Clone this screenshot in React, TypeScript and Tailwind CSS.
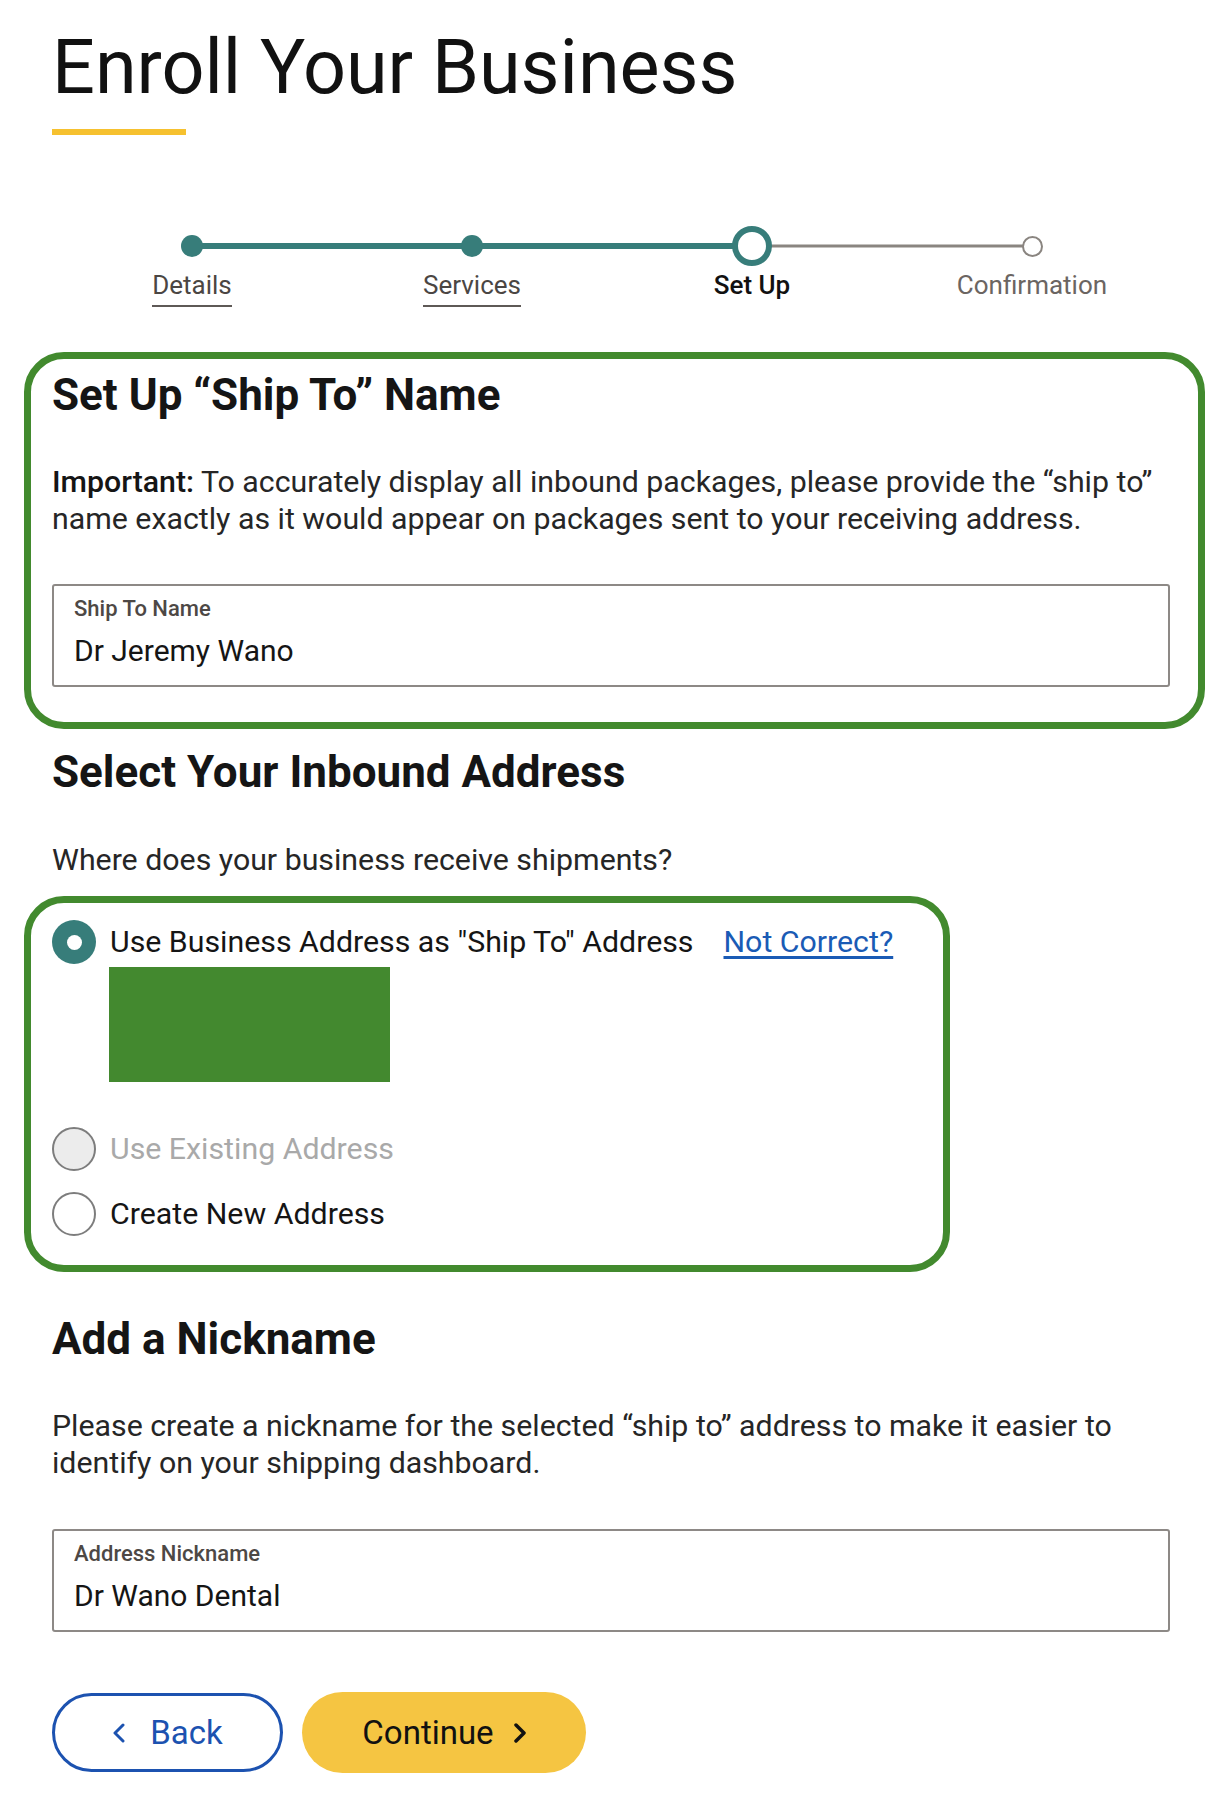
import clsx from 'clsx'

type StepState = 'done' | 'current' | 'todo'

const steps: { label: string; state: StepState }[] = [
  { label: 'Details', state: 'done' },
  { label: 'Services', state: 'done' },
  { label: 'Set Up', state: 'current' },
  { label: 'Confirmation', state: 'todo' }
]

const StepDot: React.FC<{ state: StepState }> = ({ state }) => {
  if (state === 'done') return <div className="relative z-10 h-[22px] w-[22px] rounded-full bg-[#377d7a]" />
  if (state === 'current')
    return <div className="relative z-10 h-10 w-10 rounded-full border-[6px] border-[#377d7a] bg-white" />
  return <div className="relative z-10 h-[21px] w-[21px] rounded-full border-[2.5px] border-[#8a8580] bg-white" />
}

const Stepper: React.FC = () => {
  return (
    <div className="mt-[91px] grid w-[1120px] grid-cols-4">
      {steps.map((step, i) => {
        const leftDone = step.state !== 'todo'
        const rightDone = i < steps.length - 1 && steps[i + 1].state !== 'todo'
        return (
          <div key={step.label} className="flex flex-col items-center">
            <div className="relative flex h-10 w-full items-center justify-center">
              {i > 0 && (
                <div
                  className={clsx(
                    'absolute left-0 right-1/2 top-1/2 -translate-y-1/2',
                    leftDone ? 'h-[6px] bg-[#377d7a]' : 'h-[3px] bg-[#8a8580]'
                  )}
                />
              )}
              {i < steps.length - 1 && (
                <div
                  className={clsx(
                    'absolute left-1/2 right-0 top-1/2 -translate-y-1/2',
                    rightDone ? 'h-[6px] bg-[#377d7a]' : 'h-[3px] bg-[#8a8580]'
                  )}
                />
              )}
              <StepDot state={step.state} />
            </div>
            <span
              className={clsx(
                'mt-1 border-b-2 pb-[5px] text-[26px] leading-[30px]',
                step.state === 'done' && 'border-[#5e5956] text-[#4b4643]',
                step.state === 'current' && 'border-transparent font-medium text-[#111]',
                step.state === 'todo' && 'border-transparent text-[#6b6562]'
              )}>
              {step.label}
            </span>
          </div>
        )
      })}
    </div>
  )
}

const TextField: React.FC<{ label: string; value: string; className?: string }> = ({ label, value, className }) => {
  return (
    <div className={clsx('h-[103px] w-[1118px] rounded-[3px] border-2 border-[#8d8986] px-5 pt-[10px]', className)}>
      <div className="text-[22px] font-medium leading-[26px] text-[#4d4845]">{label}</div>
      <div className="mt-[11px] text-[30px] leading-9 text-[#151515]">{value}</div>
    </div>
  )
}

const Radio: React.FC<{ variant: 'checked' | 'disabled' | 'empty' }> = ({ variant }) => {
  if (variant === 'checked')
    return (
      <div className="flex h-11 w-11 shrink-0 items-center justify-center rounded-full bg-[#377d7a]">
        <div className="h-[15px] w-[15px] rounded-full bg-white" />
      </div>
    )
  return (
    <div
      className={clsx(
        'h-11 w-11 shrink-0 rounded-full border-2 border-[#7d7d7d]',
        variant === 'disabled' ? 'bg-[#ececec]' : 'bg-white'
      )}
    />
  )
}

export default function App() {
  return (
    <div className="min-h-[1802px] bg-white pl-[52px] pt-[27px] font-['Roboto',sans-serif] text-[#151515]">
      <h1 className="text-[75.5px] leading-[80px] text-[#111]">Enroll Your Business</h1>
      <div className="mt-[22px] h-[6px] w-[134px] bg-[#f6c12f]" />

      <Stepper />

      {/* ship to name */}
      <section className="-ml-[28px] mt-[45px] w-[1181px] rounded-[40px] border-[7px] border-[#428a2e] pb-[35px] pl-[21px] pr-[28px] pt-[11px]">
        <h2 className="text-[44px] font-bold leading-[50px]">Set Up “Ship To” Name</h2>
        <p className="mt-[43px] text-[30.3px] leading-[37px] text-[#262626]">
          <span className="font-medium text-[#151515]">Important:</span> To accurately display all inbound packages,
          please provide the “ship to” name exactly as it would appear on packages sent to your receiving address.
        </p>
        <TextField className="mt-[47px]" label="Ship To Name" value="Dr Jeremy Wano" />
      </section>

      {/* inbound address */}
      <h2 className="mt-[18px] text-[44px] font-bold leading-[50px]">Select Your Inbound Address</h2>
      <p className="mt-[44px] text-[30.3px] leading-[37px] text-[#262626]">Where does your business receive shipments?</p>

      <section className="-ml-[28px] mt-[18px] w-[926px] rounded-[40px] border-[7px] border-[#428a2e] pb-[29px] pl-[21px] pt-[17px]">
        <div className="flex items-center">
          <Radio variant="checked" />
          <span className="ml-[14px] text-[30.3px] leading-[44px] text-[#151515]">
            Use Business Address as "Ship To" Address
          </span>
          <a className="ml-[30px] text-[30.3px] leading-[44px] text-[#1a5bb5] underline underline-offset-4">
            Not Correct?
          </a>
        </div>
        <div className="ml-[57px] mt-[3px] h-[115px] w-[281px] bg-[#43892f]" />
        <div className="mt-[45px] flex items-center">
          <Radio variant="disabled" />
          <span className="ml-[14px] text-[30.3px] leading-[44px] text-[#a9a9a9]">Use Existing Address</span>
        </div>
        <div className="mt-[21px] flex items-center">
          <Radio variant="empty" />
          <span className="ml-[14px] text-[30.3px] leading-[44px] text-[#151515]">Create New Address</span>
        </div>
      </section>

      {/* nickname */}
      <h2 className="mt-[42px] text-[44px] font-bold leading-[50px]">Add a Nickname</h2>
      <p className="mt-[43px] w-[1118px] text-[30.3px] leading-[37px] text-[#262626]">
        Please create a nickname for the selected “ship to” address to make it easier to identify on your shipping
        dashboard.
      </p>
      <TextField className="mt-[48px]" label="Address Nickname" value="Dr Wano Dental" />

      <div className="mt-[60px] flex items-center gap-[19px] pb-[29px]">
        <button className="flex h-[79px] w-[231px] items-center justify-center gap-[25px] rounded-full border-[3px] border-[#1c52b0] bg-white text-[33px] text-[#1c52b0]">
          <svg width="13" height="20" viewBox="0 0 13 20" fill="none">
            <path d="M11 2 L3 10 L11 18" stroke="#1c52b0" strokeWidth="3" strokeLinecap="round" strokeLinejoin="round" />
          </svg>
          Back
        </button>
        <button className="flex h-[81px] w-[284px] items-center justify-center gap-5 rounded-full bg-[#f5c542] text-[33px] text-[#111]">
          Continue
          <svg width="12" height="20" viewBox="0 0 12 20" fill="none">
            <path d="M2 2 L10 10 L2 18" stroke="#111" strokeWidth="3.5" strokeLinecap="round" strokeLinejoin="round" />
          </svg>
        </button>
      </div>
    </div>
  )
}
